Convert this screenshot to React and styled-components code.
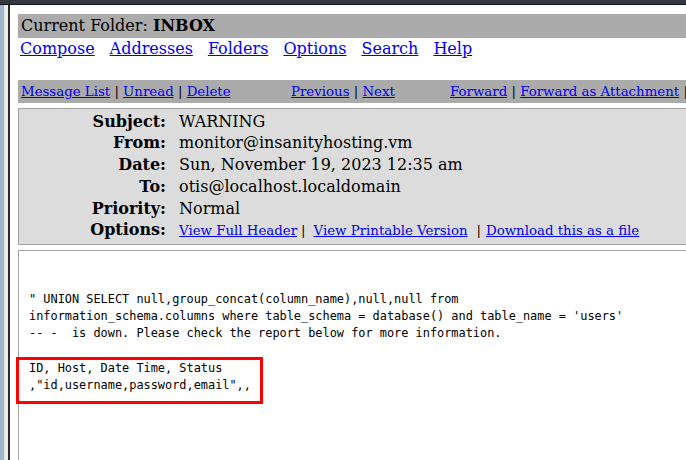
import React from 'react';
import styled, { createGlobalStyle } from 'styled-components';

const GlobalStyle = createGlobalStyle`
  html, body {
    margin: 0;
    padding: 0;
    overflow: hidden;
    background: #ffffff;
    font-family: "DejaVu Serif", serif;
    color: #000;
  }
`;

const Window = styled.div`
  display: flex;
  flex-direction: column;
  height: 460px;
`;

const TitleStrip = styled.div`
  height: 4px;
  background: #34373f;
  border-bottom: 1px solid #16171b;
  flex-shrink: 0;
`;

const Body = styled.div`
  display: flex;
  flex: 1;
`;

const Edge = styled.div`
  width: ${(p) => p.$w}px;
  background: ${(p) => p.$c};
  flex-shrink: 0;
`;

const Page = styled.div`
  width: 840px;
  flex-shrink: 0;
  padding: 9px 0 0 8px;
`;

const FolderBar = styled.div`
  background: #ababab;
  height: 24px;
  line-height: 24px;
  padding-left: 3px;
  font-size: 16px;

  b {
    font-weight: bold;
  }
`;

const MenuRow = styled.div`
  display: flex;
  gap: 15px;
  padding-left: 2px;
  font-size: 16px;
  line-height: 22px;
  margin-bottom: 20px;
`;

const A = styled.a`
  color: #0000ee;
  text-decoration: underline;
  cursor: pointer;
`;

const NavBar = styled.div`
  display: grid;
  grid-template-columns: 270px 159px auto;
  background: #ababab;
  height: 23px;
  line-height: 23px;
  padding-left: 3px;
  font-size: 13.33px;
  white-space: nowrap;
  margin-bottom: 5px;
`;

const HeaderBox = styled.div`
  display: grid;
  grid-template-columns: 147px auto;
  column-gap: 13px;
  align-items: baseline;
  background: #dcdcdc;
  border: 1px solid #a3a3a3;
  padding: 1.5px 0 1.5px;
  margin-bottom: 5px;
  line-height: 21.8px;
  font-size: 16px;
`;

const Label = styled.div`
  text-align: right;
  font-weight: bold;
`;

const Value = styled.div`
  white-space: nowrap;
  font-size: ${(p) => (p.$small ? '13.33px' : '16px')};
`;

const Sep = styled.span`
  margin: ${(p) => p.$m || '0 4px'};
`;

const MessageBox = styled.div`
  border: 1px solid #a3a3a3;
  height: 180px;
  padding: 40.4px 0 0 10px;
  font-family: "DejaVu Sans Mono", monospace;
  font-size: 11.9px;
  line-height: 17px;
  white-space: pre;
`;

const Highlight = styled.div`
  display: inline-block;
  border: 3px solid #ff0000;
  margin: -2px 0 0 -13px;
  padding: 0 9px 7px 10px;
`;

function Nav({ items, trailing }) {
  return (
    <span>
      {items.map((t, i) => (
        <React.Fragment key={t}>
          {i > 0 && ' | '}
          <A>{t}</A>
        </React.Fragment>
      ))}
      {trailing && ' |'}
    </span>
  );
}

const headers = [
  ['Subject:', 'WARNING'],
  ['From:', 'monitor@insanityhosting.vm'],
  ['Date:', 'Sun, November 19, 2023 12:35 am'],
  ['To:', 'otis@localhost.localdomain'],
  ['Priority:', 'Normal'],
];

export default function App() {
  return (
    <>
      <GlobalStyle />
      <Window>
        <TitleStrip />
        <Body>
          <Edge $w={4} $c="#9fb5ca" />
          <Edge $w={1} $c="#e4e6e8" />
          <Edge $w={3} $c="#efebe8" />
          <Edge $w={2} $c="#2b2b2b" />
          <Page>
            <FolderBar>
              Current Folder: <b>INBOX</b>
            </FolderBar>
            <MenuRow>
              {['Compose', 'Addresses', 'Folders', 'Options', 'Search', 'Help'].map((t) => (
                <A key={t}>{t}</A>
              ))}
            </MenuRow>
            <NavBar>
              <Nav items={['Message List', 'Unread', 'Delete']} />
              <Nav items={['Previous', 'Next']} />
              <Nav items={['Forward', 'Forward as Attachment']} trailing />
            </NavBar>
            <HeaderBox>
              {headers.map(([k, v]) => (
                <React.Fragment key={k}>
                  <Label>{k}</Label>
                  <Value>{v}</Value>
                </React.Fragment>
              ))}
              <Label>Options:</Label>
              <Value $small>
                <A>View Full Header</A>
                <Sep $m="0 8px 0 4px">|</Sep>
                <A>View Printable Version</A>
                <Sep $m="0 5px 0 9px">|</Sep>
                <A>Download this as a file</A>
              </Value>
            </HeaderBox>
            <MessageBox>
              {`" UNION SELECT null,group_concat(column_name),null,null from
information_schema.columns where table_schema = database() and table_name = 'users'
-- -  is down. Please check the report below for more information.

`}
              <Highlight>{`ID, Host, Date Time, Status
,"id,username,password,email",,`}</Highlight>
            </MessageBox>
          </Page>
        </Body>
      </Window>
    </>
  );
}
